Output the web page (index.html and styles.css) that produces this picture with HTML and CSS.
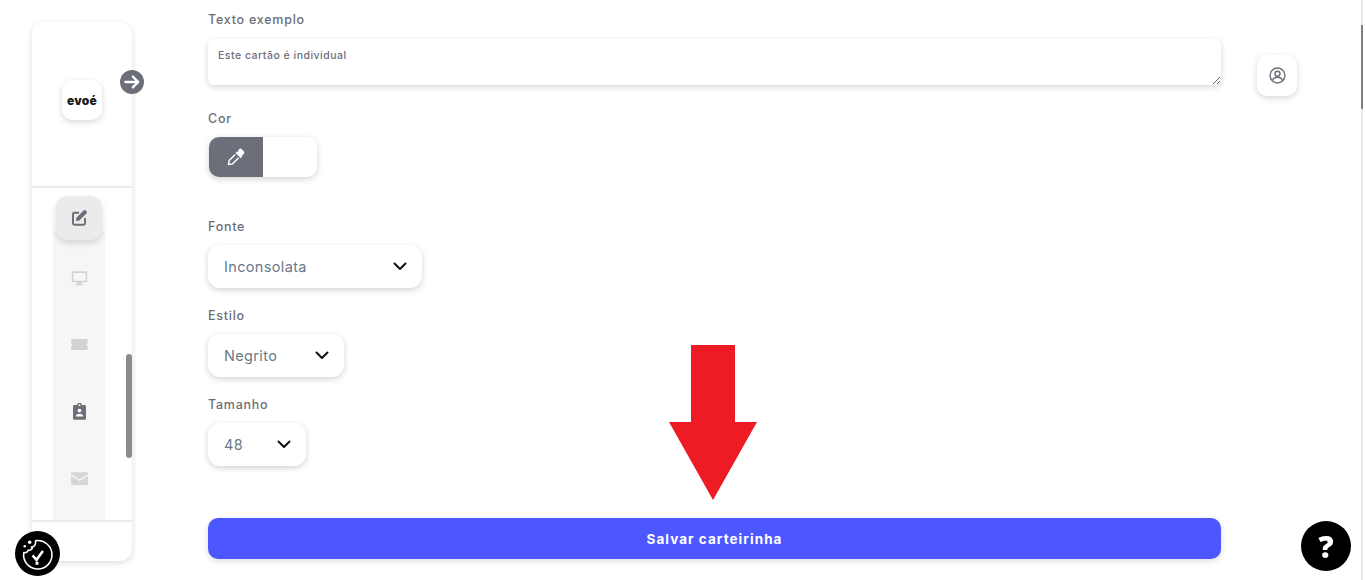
FILE: index.html
```html
<!DOCTYPE html>
<html lang="pt-BR">
<head>
    <meta charset="UTF-8">
    <title>Salvar carteirinha - evoé</title>
    <link rel="stylesheet" href="styles.css">
</head>
<body>
    <!-- Sidebar -->
    <aside class="sidebar">
        <div class="sidebar-top">
            <div class="logo-tile">evoé</div>
            <span class="sidebar-toggle">
                <svg viewBox="0 0 24 24" width="20" height="20"><path d="M4 12h15M13 5.500l6.500 6.500-6.500 6.500" fill="none" stroke="#fff" stroke-width="2.800" stroke-linecap="round" stroke-linejoin="round"/></svg>
            </span>
        </div>
        <nav class="sidebar-nav">
            <div class="nav-strip">
                <a class="nav-item nav-active">
                    <svg viewBox="0 0 24 24" width="18" height="18"><path d="M11 5H6a2 2 0 0 0-2 2v12a2 2 0 0 0 2 2h12a2 2 0 0 0 2-2v-6" fill="none" stroke="#6c6e79" stroke-width="2.600" stroke-linecap="round"/><path d="M18.400 1.800a1.600 1.600 0 0 1 2.200 0l1.600 1.600a1.600 1.600 0 0 1 0 2.200L12.400 15.400 8 16l.6-4.400z" fill="#6c6e79"/></svg>
                </a>
                <a class="nav-item nav-desktop">
                    <svg viewBox="0 0 24 24" width="17" height="16"><path d="M2 2h20a1.500 1.500 0 0 1 1.500 1.500v13.500a1.500 1.500 0 0 1-1.500 1.500h-7l.6 2.500H18v2H6v-2h2.400l.6-2.500H2a1.500 1.500 0 0 1-1.500-1.500V3.500A1.500 1.500 0 0 1 2 2zm.8 2.500v11.500h18.400V4.500z" fill="#d2d2d2"/></svg>
                </a>
                <a class="nav-item nav-ticket">
                    <svg viewBox="0 0 24 16" width="17" height="11"><path d="M1.500 0h21A1.500 1.500 0 0 1 24 1.500V6a2 2 0 0 0 0 4v4.500a1.500 1.500 0 0 1-1.500 1.500h-21A1.500 1.500 0 0 1 0 14.500V10a2 2 0 0 0 0-4V1.500A1.500 1.500 0 0 1 1.500 0z" fill="#d2d2d2"/></svg>
                </a>
                <a class="nav-item nav-badge">
                    <svg viewBox="0 0 14 18" width="13" height="17"><path d="M1.500 2H4.500a2.500 2.500 0 0 1 5 0h3A1.500 1.500 0 0 1 14 3.500v13a1.500 1.500 0 0 1-1.500 1.500h-11A1.500 1.500 0 0 1 0 16.500v-13A1.500 1.500 0 0 1 1.500 2z" fill="#6c6e79"/><circle cx="7" cy="8" r="2" fill="#fff"/><path d="M3 14.500c0-2 1.800-3 4-3s4 1 4 3z" fill="#fff"/><circle cx="7" cy="2.200" r="1" fill="#fff"/></svg>
                </a>
                <a class="nav-item nav-mail">
                    <svg viewBox="0 0 24 18" width="17" height="13"><path d="M1.500 0h21A1.500 1.500 0 0 1 24 1.500V3l-12 7L0 3V1.500A1.500 1.500 0 0 1 1.500 0zM0 5.500l12 7 12-7v11A1.500 1.500 0 0 1 22.500 18h-21A1.500 1.500 0 0 1 0 16.500z" fill="#d6d6d6"/></svg>
                </a>
            </div>
            <span class="nav-scroll"></span>
        </nav>
        <div class="sidebar-bottom"></div>
    </aside>

    <!-- Card form -->
    <main class="form-col">
        <label class="field-label">Texto exemplo</label>
        <textarea class="sample-text">Este cartão é individual</textarea>

        <label class="field-label label-cor">Cor</label>
        <div class="color-picker">
            <span class="color-btn">
                <svg viewBox="0 0 18 18" width="20" height="20"><path d="M11.500 2.200a2 2 0 0 1 2.900 0l1.400 1.400a2 2 0 0 1 0 2.900l-1.900 1.900.6.600-1.100 1.100-4.800-4.800 1.100-1.100.6.600z" fill="#fff"/><path d="M8.300 6.700 2.800 12.200l-.6 3.600 3.600-.6 5.500-5.500" fill="none" stroke="#fff" stroke-width="1.300" stroke-linejoin="round"/></svg>
            </span>
            <span class="color-swatch"></span>
        </div>

        <label class="field-label label-fonte">Fonte</label>
        <div class="select-box select-fonte">
            <span>Inconsolata</span>
            <svg class="chevron" viewBox="0 0 14 9" width="14" height="9"><path d="M1.500 1.500 7 7l5.500-5.500" fill="none" stroke="#111" stroke-width="2" stroke-linecap="round" stroke-linejoin="round"/></svg>
        </div>

        <label class="field-label label-next">Estilo</label>
        <div class="select-box select-estilo">
            <span>Negrito</span>
            <svg class="chevron" viewBox="0 0 14 9" width="14" height="9"><path d="M1.500 1.500 7 7l5.500-5.500" fill="none" stroke="#111" stroke-width="2" stroke-linecap="round" stroke-linejoin="round"/></svg>
        </div>

        <label class="field-label label-next">Tamanho</label>
        <div class="select-box select-tamanho">
            <span>48</span>
            <svg class="chevron" viewBox="0 0 14 9" width="14" height="9"><path d="M1.500 1.500 7 7l5.500-5.500" fill="none" stroke="#111" stroke-width="2" stroke-linecap="round" stroke-linejoin="round"/></svg>
        </div>

        <button class="save-button">Salvar carteirinha</button>
    </main>

    <!-- Account -->
    <div class="account-col">
        <a class="account-button">
            <svg viewBox="0 0 24 24" width="17" height="17"><circle cx="12" cy="12" r="10.500" fill="none" stroke="#6c6e79" stroke-width="2"/><circle cx="12" cy="9.500" r="3.500" fill="none" stroke="#6c6e79" stroke-width="2"/><path d="M5 19c1-3 3.500-4.500 7-4.500s6 1.500 7 4.500" fill="none" stroke="#6c6e79" stroke-width="2"/></svg>
        </a>
    </div>

    <!-- Things lying over the page -->
    <svg class="red-arrow" viewBox="0 0 88 155" width="88" height="155"><polygon points="22,0 66,0 66,77 88,77 44,155 0,77 22,77" fill="#ed1c24"/></svg>

    <a class="cookie-button">
        <svg viewBox="0 0 46 46" width="46" height="46"><path d="M21 9.500a14.500 14.500 0 1 1-12 12c2 .5 4-.3 4.500-2.500 2.500 .5 4.500-1 4.500-3.500 2 0 3.500-3 3-6z" fill="none" stroke="#fff" stroke-width="1.600" stroke-linejoin="round"/><path d="M18 24.500l4 4.500 6.500-9" fill="none" stroke="#fff" stroke-width="2.600"/><rect x="21" y="31" width="3" height="3" fill="#fff"/><circle cx="15" cy="11" r="1.800" fill="#fff"/><circle cx="10" cy="15" r="1.300" fill="#fff"/><circle cx="17" cy="16" r="1" fill="#fff"/></svg>
    </a>
    <a class="help-button">?</a>

    <div class="page-scroll"><span class="page-thumb"></span></div>
</body>
</html>
```

FILE: styles.css
```css
/* General */
* {
    box-sizing: border-box;
}
html, body {
    height: 100%;
    margin: 0;
    overflow: hidden;
}
body {
    display: flex;
    align-items: flex-start;
    font-family: Inter, "Open Sans", sans-serif;
    background-color: #ffffff;
    color: #6c6e79;
}

/* Sidebar */
.sidebar {
    width: 100px;
    height: 539px;
    margin: 22px 0 0 32px;
    flex-shrink: 0;
    display: flex;
    flex-direction: column;
    background-color: #ffffff;
    border-radius: 12px;
    box-shadow: 0 2px 6px rgba(0, 0, 0, 0.14);
}
.sidebar-top {
    position: relative;
    height: 166px;
    display: flex;
    align-items: center;
    justify-content: center;
    padding-bottom: 8px;
    border-bottom: 2px solid #ebebeb;
}
.logo-tile {
    width: 40px;
    height: 40px;
    display: flex;
    align-items: center;
    justify-content: center;
    background-color: #ffffff;
    border-radius: 10px;
    box-shadow: 0 2px 6px rgba(0, 0, 0, 0.16);
    font-size: 12px;
    font-weight: 900;
    letter-spacing: 0.2px;
    color: #1c1c1c;
}
.sidebar-toggle {
    position: absolute;
    top: 48px;
    right: -12px;
    width: 24px;
    height: 24px;
    display: flex;
    align-items: center;
    justify-content: center;
    background-color: #6c6e79;
    border-radius: 50%;
}
.sidebar-nav {
    position: relative;
    flex: 1;
    min-height: 0;
    overflow: hidden;
    padding-left: 21px;
}
.nav-strip {
    width: 52px;
    height: 100%;
    display: flex;
    flex-direction: column;
    align-items: center;
    background: linear-gradient(#ffffff 43px, #f6f6f6 43px);
}
.nav-item {
    width: 46px;
    height: 67px;
    flex-shrink: 0;
    display: flex;
    align-items: center;
    justify-content: center;
}
.nav-active {
    height: 44px;
    margin-top: 8px;
    margin-bottom: 4px;
    background-color: #ebebeb;
    border-radius: 12px;
    box-shadow: 0 3px 6px rgba(0, 0, 0, 0.14);
}
.nav-scroll {
    position: absolute;
    top: 166px;
    right: 0;
    width: 6px;
    height: 104px;
    background-color: #8c8c8c;
    border-radius: 3px;
}
.sidebar-bottom {
    height: 41px;
    border-top: 2px solid #ebebeb;
}

/* Form */
.form-col {
    width: 1013px;
    margin-left: 76px;
    padding-top: 12px;
    display: flex;
    flex-direction: column;
    align-items: flex-start;
}
.field-label {
    height: 14px;
    line-height: 16px;
    font-size: 12.500px;
    font-weight: 500;
    letter-spacing: 0.75px;
    color: #6c6e79;
}
.sample-text {
    width: 100%;
    height: 46px;
    margin-top: 13px;
    padding: 10px;
    display: block;
    border: none;
    outline: none;
    border-radius: 6px;
    background-color: #ffffff;
    box-shadow: 0 2px 6px rgba(0, 0, 0, 0.16);
    font-family: inherit;
    font-size: 10.500px;
    font-weight: 500;
    letter-spacing: 0.5px;
    color: #6c6e79;
}
.label-cor {
    margin-top: 26px;
}
.color-picker {
    width: 108px;
    height: 40px;
    margin-top: 12px;
    margin-left: 1px;
    display: flex;
    overflow: hidden;
    border-radius: 10px;
    box-shadow: 0 2px 6px rgba(0, 0, 0, 0.18);
}
.color-btn {
    width: 54px;
    display: flex;
    align-items: center;
    justify-content: center;
    background-color: #6c6e79;
}
.color-swatch {
    flex: 1;
    background-color: #ffffff;
}
.label-fonte {
    margin-top: 42px;
}
.label-next {
    margin-top: 20px;
}
.select-box {
    height: 43px;
    margin-top: 12px;
    padding: 0 15px 0 16px;
    display: flex;
    align-items: center;
    justify-content: space-between;
    background-color: #ffffff;
    border-radius: 12px;
    box-shadow: 0 2px 6px rgba(0, 0, 0, 0.18);
    font-size: 14.500px;
    font-weight: 400;
    letter-spacing: 0.35px;
    color: #68798a;
}
.select-fonte {
    width: 214px;
}
.select-estilo {
    width: 136px;
}
.select-tamanho {
    width: 98px;
}
.save-button {
    width: 100%;
    height: 41px;
    margin-top: 52px;
    border: none;
    border-radius: 10px;
    background-color: #4c57ff;
    box-shadow: 0 2px 6px rgba(0, 0, 0, 0.14);
    font-family: inherit;
    font-size: 13.500px;
    font-weight: 700;
    letter-spacing: 1.05px;
    color: #ffffff;
}

/* Account */
.account-col {
    margin-left: 36px;
    padding-top: 55px;
}
.account-button {
    width: 40px;
    height: 41px;
    display: flex;
    align-items: center;
    justify-content: center;
    border-radius: 10px;
    background-color: #ffffff;
    box-shadow: 0 2px 6px rgba(0, 0, 0, 0.16);
}

/* Overlays */
.red-arrow {
    position: absolute;
    left: 669px;
    top: 345px;
}
.cookie-button {
    position: fixed;
    left: 15px;
    top: 531px;
    width: 45px;
    height: 45px;
    display: flex;
    align-items: center;
    justify-content: center;
    background-color: #000000;
    border-radius: 50%;
}
.help-button {
    position: fixed;
    left: 1301px;
    top: 521px;
    width: 50px;
    height: 50px;
    display: flex;
    align-items: center;
    justify-content: center;
    background-color: #000000;
    border-radius: 50%;
    font-family: "Open Sans", sans-serif;
    font-size: 30px;
    font-weight: 800;
    color: #ffffff;
}
.page-scroll {
    position: fixed;
    top: 0;
    right: 2px;
    width: 2px;
    height: 100%;
    background-color: #ebebeb;
}
.page-thumb {
    display: block;
    width: 100%;
    height: 84px;
    margin-top: 25px;
    background-color: #7f7f7f;
}
```
